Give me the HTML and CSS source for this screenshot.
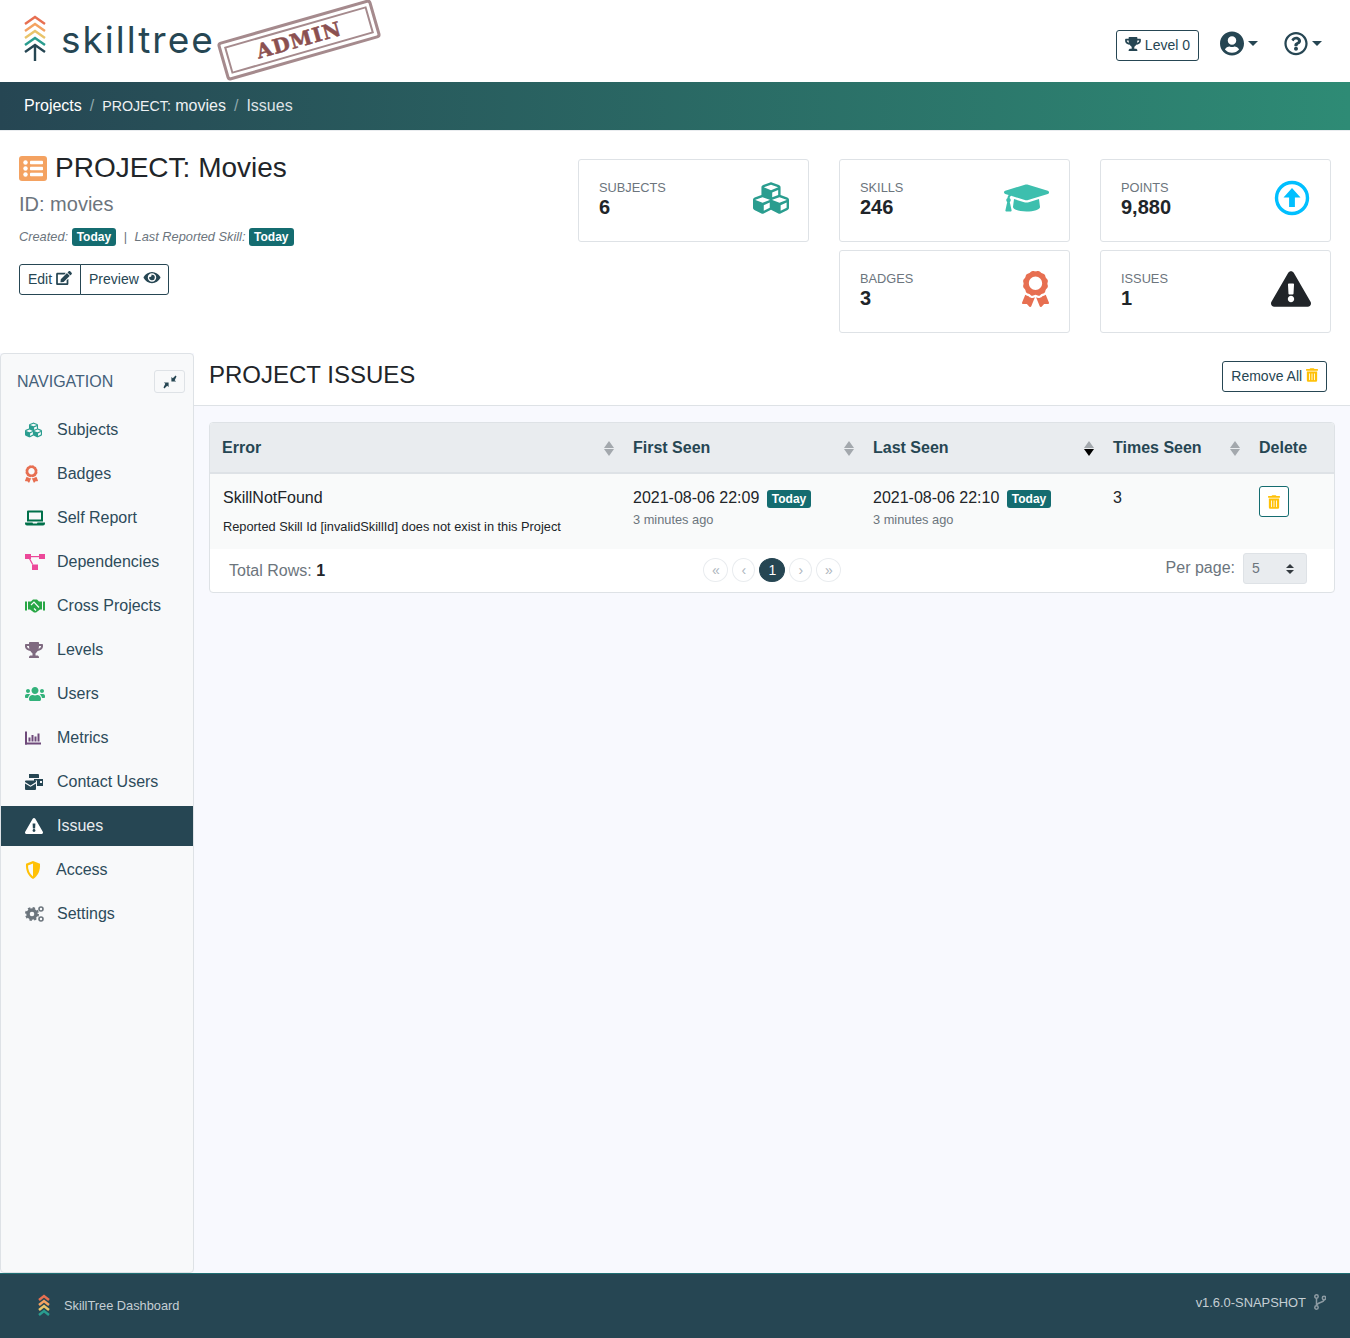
FILE: index.html
```html
<!DOCTYPE html>
<html lang="en">
<head>
    <meta charset="UTF-8">
    <title>SkillTree Dashboard</title>
    <link rel="stylesheet" href="styles.css">
</head>
<body>
    <svg class="sprite" xmlns="http://www.w3.org/2000/svg">
        <symbol id="i-cubes" viewBox="0 0 512 512"><path d="M488.6 250.2L392 214V105.5c0-15-9.3-28.4-23.4-33.7l-100-37.5c-8.1-3.1-17.1-3.1-25.3 0l-100 37.5c-14.1 5.3-23.4 18.7-23.4 33.7V214l-96.6 36.2C9.3 255.5 0 268.9 0 283.9V394c0 13.6 7.7 26.1 19.9 32.2l100 50c10.1 5.1 22.1 5.1 32.2 0l103.9-52 103.9 52c10.1 5.1 22.1 5.1 32.2 0l100-50c12.2-6.1 19.9-18.6 19.9-32.2V283.9c0-15-9.3-28.4-23.4-33.7zM358 214.8l-85 31.9v-68.2l85-37v73.3zM154 104.1l102-38.2 102 38.2v.6l-102 41.4-102-41.4v-.6zm84 291.1l-85 42.5v-79.1l85-38.8v75.4zm0-112l-102 41.4-102-41.4v-.6l102-38.2 102 38.2v.6zm240 112l-85 42.5v-79.1l85-38.8v75.4zm0-112l-102 41.4-102-41.4v-.6l102-38.2 102 38.2v.6z"/></symbol>
        <symbol id="i-award" viewBox="0 0 384 512"><path d="M97.12 362.63c-8.69-8.69-4.16-6.24-25.12-11.85-9.51-2.55-17.87-7.45-25.43-13.32L1.2 448.7c-4.39 10.77 3.81 22.47 15.43 22.03l52.69-2.01L105.56 507c8 8.44 22.04 5.81 26.43-4.96l52.05-127.62c-10.84 6.04-22.87 9.58-35.31 9.58-19.5 0-37.82-7.59-51.61-21.37zM382.8 448.7l-45.37-111.24c-7.56 5.88-15.92 10.77-25.43 13.32-21.07 5.64-16.45 3.18-25.12 11.85-13.79 13.78-32.12 21.37-51.62 21.37-12.44 0-24.47-3.55-35.31-9.58L252 502.04c4.39 10.77 18.44 13.4 26.43 4.96l36.25-38.28 52.69 2.01c11.62.44 19.82-11.27 15.43-22.03zM263 340c15.28-15.55 17.03-14.21 38.79-20.14 13.89-3.79 24.75-14.84 28.47-28.98 7.48-28.4 5.54-24.97 25.95-45.75 10.17-10.35 14.14-25.44 10.42-39.58-7.47-28.38-7.48-24.42 0-52.83 3.72-14.14-.25-29.23-10.42-39.58-20.41-20.78-18.47-17.36-25.95-45.75-3.72-14.14-14.58-25.19-28.47-28.98-27.88-7.61-24.52-5.62-44.95-26.41-10.17-10.35-25-14.4-38.89-10.61-27.87 7.6-23.98 7.61-51.9 0-13.89-3.79-28.72.25-38.89 10.61-20.41 20.78-17.05 18.8-44.94 26.41-13.89 3.79-24.75 14.84-28.47 28.98-7.47 28.39-5.54 24.97-25.95 45.75-10.17 10.35-14.15 25.44-10.42 39.58 7.47 28.36 7.48 24.4 0 52.82-3.72 14.14.25 29.23 10.42 39.59 20.41 20.78 18.47 17.35 25.95 45.75 3.72 14.14 14.58 25.19 28.47 28.98C104.6 325.96 106.27 325 121 340c13.23 13.47 33.84 15.88 49.74 5.82a39.676 39.676 0 0 1 42.53 0c15.89 10.06 36.5 7.65 49.73-5.82zM97.66 175.96c0-53.03 42.24-96.02 94.34-96.02s94.34 42.99 94.34 96.02-42.24 96.02-94.34 96.02-94.34-42.99-94.34-96.02z"/></symbol>
        <symbol id="i-warning" viewBox="0 0 576 512"><path d="M569.517 440.013C587.975 472.007 564.806 512 527.94 512H48.054c-36.937 0-59.999-40.055-41.577-71.987L246.423 23.985c18.467-32.009 64.72-31.951 83.154 0l239.94 416.028zM288 354c-25.405 0-46 20.595-46 46s20.595 46 46 46 46-20.595 46-46-20.595-46-46-46zm-43.673-165.346l7.418 136c.347 6.364 5.609 11.346 11.982 11.346h48.546c6.373 0 11.635-4.982 11.982-11.346l7.418-136c.375-6.874-5.098-12.654-11.982-12.654h-63.383c-6.884 0-12.356 5.78-11.981 12.654z"/></symbol>
        <symbol id="i-trophy" viewBox="0 0 576 512"><path d="M552 64H448V24c0-13.3-10.7-24-24-24H152c-13.3 0-24 10.7-24 24v40H24C10.7 64 0 74.7 0 88v56c0 35.7 22.5 72.4 61.9 100.7 31.5 22.7 69.8 37.1 110 41.7C203.3 338.5 240 360 240 360v72h-48c-35.3 0-64 20.7-64 56v12c0 6.6 5.4 12 12 12h296c6.6 0 12-5.4 12-12v-12c0-35.3-28.7-56-64-56h-48v-72s36.7-21.5 68.1-73.6c40.3-4.6 78.6-19 110-41.7 39.3-28.3 61.9-65 61.9-100.7V88c0-13.3-10.7-24-24-24zM99.3 192.8C74.9 175.2 64 155.6 64 144v-16h64.2c1 32.6 5.8 61.2 12.8 86.2-15.1-5.2-29.2-12.4-41.7-21.4zM512 144c0 16.1-17.7 36.1-35.3 48.8-12.5 9-26.7 16.2-41.8 21.4 7-25 11.8-53.6 12.8-86.2H512v16z"/></symbol>
        <symbol id="i-trash" viewBox="0 0 448 512"><path d="M32 464a48 48 0 0 0 48 48h288a48 48 0 0 0 48-48V128H32zm272-256a16 16 0 0 1 32 0v224a16 16 0 0 1-32 0zm-96 0a16 16 0 0 1 32 0v224a16 16 0 0 1-32 0zm-96 0a16 16 0 0 1 32 0v224a16 16 0 0 1-32 0zM432 32H312l-9.4-18.7A24 24 0 0 0 281.1 0H166.8a23.72 23.72 0 0 0-21.4 13.3L136 32H16A16 16 0 0 0 0 48v32a16 16 0 0 0 16 16h416a16 16 0 0 0 16-16V48a16 16 0 0 0-16-16z"/></symbol>
    </svg>

    <header class="topbar">
        <div class="brand">
            <svg class="brand-mark" viewBox="0 0 24 46" fill="none" stroke-width="2.4">
                <path d="M2 9L12 2l10 7" stroke="#e76f51"/>
                <path d="M2 16l10-7 10 7" stroke="#f4a261"/>
                <path d="M2 23l10-7 10 7" stroke="#e9c46a"/>
                <path d="M2 30l10-7 10 7" stroke="#2a9d8f"/>
                <path d="M2 37l10-7 10 7M12 30v16" stroke="#264653"/>
            </svg>
            <span class="brand-name">skilltree</span>
        </div>
        <div class="stamp"><div class="stamp-inner">ADMIN</div></div>
        <div class="top-actions">
            <button class="btn level-btn"><svg class="ico"><use href="#i-trophy"/></svg> Level 0</button>
            <div class="top-menu">
                <svg class="ico-big" viewBox="0 0 496 512"><path d="M248 8C111 8 0 119 0 256s111 248 248 248 248-111 248-248S385 8 248 8zm0 96c48.6 0 88 39.4 88 88s-39.4 88-88 88-88-39.4-88-88 39.4-88 88-88zm0 344c-58.7 0-111.3-26.6-146.5-68.2 18.8-35.4 55.6-59.8 98.5-59.8 2.4 0 4.8.4 7.1 1.1 13 4.2 26.6 6.9 40.9 6.9 14.3 0 28-2.7 40.9-6.9 2.3-.7 4.7-1.1 7.1-1.1 42.9 0 79.7 24.4 98.5 59.8C359.3 421.4 306.7 448 248 448z"/></svg>
                <span class="caret"></span>
            </div>
            <div class="top-menu">
                <svg class="ico-big" viewBox="0 0 512 512"><path d="M256 8C119.043 8 8 119.083 8 256c0 136.997 111.043 248 248 248s248-111.003 248-248C504 119.083 392.957 8 256 8zm0 448c-110.532 0-200-89.431-200-200 0-110.495 89.472-200 200-200 110.491 0 200 89.471 200 200 0 110.53-89.431 200-200 200zm107.244-255.2c0 67.052-72.421 68.084-72.421 92.863V300c0 6.627-5.373 12-12 12h-45.647c-6.627 0-12-5.373-12-12v-8.659c0-35.745 27.1-50.034 47.579-61.516 17.561-9.845 28.324-16.541 28.324-29.579 0-17.246-21.999-28.693-39.784-28.693-23.189 0-33.894 10.977-48.942 29.969-4.057 5.12-11.46 6.071-16.666 2.124l-27.824-21.098c-5.107-3.872-6.251-11.066-2.644-16.363C184.846 131.491 214.94 112 261.794 112c49.071 0 101.45 38.304 101.45 88.8zM298 368c0 23.159-18.841 42-42 42s-42-18.841-42-42 18.841-42 42-42 42 18.841 42 42z"/></svg>
                <span class="caret"></span>
            </div>
        </div>
    </header>

    <nav class="crumbs">
        <a>Projects</a><span class="sep">/</span>
        <a class="crumb-mid"><span class="small-caps">PROJECT:</span> movies</a><span class="sep">/</span>
        <span class="crumb-last">Issues</span>
    </nav>

    <section class="project-head">
        <div class="project-info">
            <h1 class="project-title">
                <span class="title-icon">
                    <svg viewBox="0 0 28 25"><rect width="28" height="25" rx="3" fill="#f4a261"/><g fill="#fff"><circle cx="6.5" cy="6.5" r="2.2"/><circle cx="6.5" cy="12.5" r="2.2"/><circle cx="6.5" cy="18.5" r="2.2"/><rect x="11" y="4.7" width="13" height="3.6" rx=".8"/><rect x="11" y="10.7" width="13" height="3.6" rx=".8"/><rect x="11" y="16.7" width="13" height="3.6" rx=".8"/></g></svg>
                </span>
                PROJECT: Movies
            </h1>
            <div class="project-id">ID: movies</div>
            <div class="project-dates">
                <i>Created:</i> <span class="badge">Today</span>
                <span class="pipe">|</span>
                <i>Last Reported Skill:</i> <span class="badge">Today</span>
            </div>
            <div class="btn-group">
                <button class="btn">Edit <svg class="ico" viewBox="0 0 576 512"><path d="M402.6 83.2l90.2 90.2c3.8 3.8 3.8 10 0 13.8L274.4 405.6l-92.8 10.3c-12.4 1.4-22.9-9.1-21.5-21.5l10.3-92.8L388.8 83.2c3.8-3.8 10-3.8 13.8 0zm162-22.9l-48.8-48.8c-15.2-15.2-39.9-15.2-55.2 0l-35.4 35.4c-3.8 3.8-3.8 10 0 13.8l90.2 90.2c3.8 3.8 10 3.8 13.8 0l35.4-35.4c15.2-15.3 15.2-40 0-55.2zM384 346.2V448H64V128h229.8c3.2 0 6.2-1.3 8.5-3.5l40-40c7.6-7.6 2.2-20.5-8.5-20.5H48C21.5 64 0 85.5 0 112v352c0 26.5 21.5 48 48 48h352c26.5 0 48-21.5 48-48V306.2c0-10.7-12.9-16-20.5-8.5l-40 40c-2.2 2.3-3.5 5.3-3.5 8.5z"/></svg></button>
                <button class="btn">Preview <svg class="ico ico-eye" viewBox="0 0 576 512"><path d="M572.52 241.4C518.29 135.59 410.93 64 288 64S57.68 135.64 3.48 241.41a32.35 32.35 0 0 0 0 29.19C57.71 376.41 165.07 448 288 448s230.32-71.64 284.52-177.41a32.35 32.35 0 0 0 0-29.19zM288 400a144 144 0 1 1 144-144 143.93 143.93 0 0 1-144 144zm0-240a95.31 95.31 0 0 0-25.31 3.79 47.85 47.85 0 0 1-66.9 66.9A95.78 95.78 0 1 0 288 160z"/></svg></button>
            </div>
        </div>
        <div class="stats">
            <div class="stat">
                <div><div class="stat-label">Subjects</div><div class="stat-value">6</div></div>
                <svg class="stat-icon stat-cubes c-subjects"><use href="#i-cubes"/></svg>
            </div>
            <div class="stat">
                <div><div class="stat-label">Skills</div><div class="stat-value">246</div></div>
                <svg class="stat-icon stat-cap" viewBox="0 0 640 512"><path d="M622.34 153.2L343.4 67.5c-15.2-4.67-31.6-4.67-46.79 0L17.66 153.2c-23.54 7.23-23.54 38.36 0 45.59l48.63 14.94c-10.67 13.19-17.23 29.28-17.88 46.9C38.78 266.15 32 276.11 32 288c0 10.78 5.68 19.85 13.86 25.65L20.33 428.53C18.11 438.52 25.71 448 35.94 448h56.11c10.24 0 17.84-9.48 15.62-19.47L82.14 313.65C90.32 307.85 96 298.78 96 288c0-11.57-6.47-21.25-15.66-26.87.76-15.02 8.44-28.3 20.69-36.72L296.6 284.5c9.06 2.78 26.44 6.25 46.79 0l278.95-85.7c23.55-7.24 23.55-38.36 0-45.6zM352.79 315.09c-28.53 8.76-52.84 3.92-65.59 0l-145.02-44.55L128 384c0 35.35 85.96 64 192 64s192-28.65 192-64l-14.18-113.47-145.03 44.56z"/></svg>
            </div>
            <div class="stat">
                <div><div class="stat-label">Points</div><div class="stat-value">9,880</div></div>
                <svg class="stat-icon stat-points" viewBox="0 0 36 36"><circle cx="18" cy="18" r="15.5" fill="none" stroke="#00bfff" stroke-width="3.4"/><path d="M18 8l8.5 9.5h-5.6V27h-5.8v-9.5H9.5z" fill="#00bfff"/></svg>
            </div>
            <div class="stat stat-second">
                <div><div class="stat-label">Badges</div><div class="stat-value">3</div></div>
                <svg class="stat-icon stat-award"><use href="#i-award"/></svg>
            </div>
            <div class="stat">
                <div><div class="stat-label">Issues</div><div class="stat-value">1</div></div>
                <svg class="stat-icon stat-warn"><use href="#i-warning"/></svg>
            </div>
        </div>
    </section>

    <div class="page">
        <aside class="sidebar">
            <div class="side-head">
                <span>NAVIGATION</span>
                <button class="collapse">
                    <svg viewBox="0 0 14 14" width="14" height="14" fill="#264653"><path d="M13.5 1.4L12.6.5 9.800 3.300 8.400 1.900v4.700h4.700l-1.400-1.400zM.5 12.600l.9.9 2.800-2.800 1.400 1.400V7.400H.9l1.400 1.400z"/></svg>
                </button>
            </div>
            <ul class="side-list">
                <li class="side-item"><span class="side-icon"><svg class="c-subjects w17"><use href="#i-cubes"/></svg></span>Subjects</li>
                <li class="side-item"><span class="side-icon"><svg class="c-badges w13"><use href="#i-award"/></svg></span>Badges</li>
                <li class="side-item"><span class="side-icon">
                    <svg viewBox="0 0 20 15" width="20" height="15" fill="#00704a"><path d="M3 0h14a1 1 0 0 1 1 1v10H2V1a1 1 0 0 1 1-1zm1 2v7h12V2zM0 12h7.500l.5 1h4l.5-1H20v1a2 2 0 0 1-2 2H2a2 2 0 0 1-2-2z"/></svg>
                </span>Self Report</li>
                <li class="side-item"><span class="side-icon">
                    <svg viewBox="0 0 20 16" width="20" height="16" fill="#ec4899"><rect width="6" height="5"/><rect x="14" width="6" height="5"/><rect x="7" y="10.500" width="6" height="5.500"/><rect x="6" y="2" width="8" height="1.200"/><path d="M4 5h1.400l3 5.500H7z"/></svg>
                </span>Dependencies</li>
                <li class="side-item"><span class="side-icon">
                    <svg viewBox="0 0 20 13" width="20" height="13" fill="#28a745"><rect y="2" width="2" height="9"/><rect x="18" y="2" width="2" height="9"/><path d="M3 2h3l2-2h4l2 2h3v8h-2l-4 3H9L5 10H3z"/><path d="M6 5.500L9 2.500l5 5.500M9 9l2 2" fill="none" stroke="#f8f9fa" stroke-width="1.200"/></svg>
                </span>Cross Projects</li>
                <li class="side-item"><span class="side-icon"><svg class="c-levels w18"><use href="#i-trophy"/></svg></span>Levels</li>
                <li class="side-item"><span class="side-icon"><svg class="c-users w20" viewBox="0 0 640 512"><path d="M96 224c35.3 0 64-28.7 64-64s-28.7-64-64-64-64 28.7-64 64 28.7 64 64 64zm448 0c35.3 0 64-28.7 64-64s-28.7-64-64-64-64 28.7-64 64 28.7 64 64 64zm32 32h-64c-17.6 0-33.5 7.1-45.1 18.6 40.3 22.1 68.9 62 75.1 109.4h66c17.7 0 32-14.3 32-32v-32c0-35.3-28.7-64-64-64zm-256 0c61.9 0 112-50.1 112-112S381.9 32 320 32 208 82.1 208 144s50.1 112 112 112zm76.8 32h-8.3c-20.8 10-43.9 16-68.5 16s-47.6-6-68.5-16h-8.3C179.6 288 128 339.6 128 403.2V432c0 26.5 21.5 48 48 48h288c26.5 0 48-21.5 48-48v-28.8c0-63.6-51.6-115.2-115.2-115.2zm-223.7-13.4C161.5 263.1 145.6 256 128 256H64c-35.3 0-64 28.7-64 64v32c0 17.7 14.3 32 32 32h65.9c6.3-47.4 34.9-87.3 75.2-109.4z"/></svg></span>Users</li>
                <li class="side-item"><span class="side-icon">
                    <svg viewBox="0 0 16 13" width="16" height="13" fill="#6f4a7a"><rect width="2" height="13"/><rect y="11" width="16" height="2"/><rect x="3.500" y="6" width="2" height="4"/><rect x="6.500" y="3.500" width="2" height="6.500"/><rect x="9.500" y="5" width="2" height="5"/><rect x="12.500" y="2" width="2" height="8"/></svg>
                </span>Metrics</li>
                <li class="side-item"><span class="side-icon">
                    <svg viewBox="0 0 18 16" width="18" height="16" fill="#264653"><path d="M4 0h9a1 1 0 0 1 1 1v3H4zM9 5h9v7h-6V6.500H9zM15 7v2h2V7zM0 7.500a1 1 0 0 1 1-1h9a1 1 0 0 1 1 1V8L5.500 11.500 0 8zM0 9.500l5.500 3.300L11 9.500V15a1 1 0 0 1-1 1H1a1 1 0 0 1-1-1z"/></svg>
                </span>Contact Users</li>
                <li class="side-item active"><span class="side-icon"><svg class="c-white w18"><use href="#i-warning"/></svg></span>Issues</li>
                <li class="side-item item-access"><span class="side-icon">
                    <svg viewBox="0 0 16 18" width="16" height="18"><path d="M8 0l7 2.800c.4 6-1.500 12-7 15.200C2.500 14.800.600 8.800 1 2.800z" fill="#ffc107"/><path d="M8 2.500L3 4.500c0 4.500 1.500 8.500 5 11z" fill="#f8f9fa"/></svg>
                </span>Access</li>
                <li class="side-item"><span class="side-icon">
                    <svg viewBox="0 0 20 16" width="20" height="16" fill="none" stroke="#6c757d"><circle cx="7" cy="8" r="4" stroke-width="3.400"/><circle cx="7" cy="8" r="6" stroke-width="2" stroke-dasharray="2.400 2.300"/><circle cx="16" cy="3" r="2" stroke-width="1.600"/><circle cx="16" cy="13" r="2" stroke-width="1.600"/></svg>
                </span>Settings</li>
            </ul>
        </aside>

        <main class="content">
            <div class="page-title">
                <h2>PROJECT ISSUES</h2>
                <button class="btn">Remove All <svg class="ico c-yellow"><use href="#i-trash"/></svg></button>
            </div>
            <div class="table-card">
                <table class="issues">
                    <colgroup><col class="col-error"><col class="col-seen"><col class="col-seen"><col class="col-times"><col></colgroup>
                    <thead>
                        <tr>
                            <th>Error<span class="sort"></span></th>
                            <th>First Seen<span class="sort"></span></th>
                            <th>Last Seen<span class="sort sort-desc"></span></th>
                            <th>Times Seen<span class="sort"></span></th>
                            <th>Delete</th>
                        </tr>
                    </thead>
                    <tbody>
                        <tr>
                            <td class="cell-error">
                                <div>SkillNotFound</div>
                                <div class="err-msg">Reported Skill Id [invalidSkillId] does not exist in this Project</div>
                            </td>
                            <td>2021-08-06 22:09 <span class="badge">Today</span><div class="ago">3 minutes ago</div></td>
                            <td>2021-08-06 22:10 <span class="badge">Today</span><div class="ago">3 minutes ago</div></td>
                            <td>3</td>
                            <td><button class="del-btn"><svg class="ico c-yellow"><use href="#i-trash"/></svg></button></td>
                        </tr>
                    </tbody>
                </table>
                <div class="table-foot">
                    <div class="total">Total Rows: <b>1</b></div>
                    <div class="pager">
                        <span class="pg pg-end">«</span><span class="pg">‹</span><span class="pg pg-on">1</span><span class="pg">›</span><span class="pg pg-end">»</span>
                    </div>
                    <div class="per-page"><span class="per-label">Per page:</span> <span class="select">5<span class="updown"></span></span></div>
                </div>
            </div>
        </main>
    </div>

    <footer class="footer">
        <div class="foot-left">
            <svg class="foot-mark" viewBox="0 0 12 22" fill="none" stroke-width="2.500">
                <path d="M1 6l5-4 5 4" stroke="#e76f51"/>
                <path d="M1 11l5-4 5 4" stroke="#f4a261"/>
                <path d="M1 16l5-4 5 4" stroke="#e9c46a"/>
                <path d="M1 21l5-4 5 4" stroke="#2a9d8f"/>
            </svg>
            SkillTree Dashboard
        </div>
        <div class="foot-right">
            v1.6.0-SNAPSHOT
            <svg viewBox="0 0 12 16" width="12" height="16" fill="none" stroke="#8d9ba3" stroke-width="1.500"><circle cx="2.500" cy="2.500" r="1.700"/><circle cx="2.500" cy="13.500" r="1.700"/><circle cx="10" cy="4" r="1.700"/><path d="M2.500 4.200v7.600M10 5.700c0 3.300-7.500 2.300-7.500 6"/></svg>
        </div>
    </footer>
</body>
</html>
```

FILE: styles.css
```css
*{
    box-sizing: border-box;
}
html, body{
    margin: 0;
    padding: 0;
}
body{
    min-height: 1338px;
    display: flex;
    flex-direction: column;
    background: #f8f9fe;
    color: #212529;
    font-family: "Liberation Sans", Arial, sans-serif;
    font-size: 16px;
}
.sprite{
    display: none;
}
button{
    font-family: inherit;
}

/* top bar */
.topbar{
    position: relative;
    height: 82px;
    flex: none;
    display: flex;
    align-items: flex-start;
    justify-content: space-between;
    background: #fff;
}
.brand{
    display: flex;
    align-items: flex-start;
    padding: 15px 0 0 23px;
}
.brand-mark{
    width: 24px;
    height: 46px;
}
.brand-name{
    margin-top: 2px;
    margin-left: 14px;
    color: #264653;
    font-family: Inter, sans-serif;
    font-size: 37px;
    font-weight: 400;
    line-height: 46px;
    letter-spacing: 2px;
}
.stamp{
    position: absolute;
    left: 219px;
    top: 20px;
    width: 160px;
    height: 40px;
    padding: 3px;
    border: 3px solid #a58a8d;
    border-radius: 4px;
    transform: rotate(-16deg);
}
.stamp-inner{
    height: 100%;
    border: 2px solid #a58a8d;
    color: #8b5050;
    font-family: "DejaVu Serif", serif;
    font-size: 20px;
    font-weight: bold;
    line-height: 24px;
    letter-spacing: 1px;
    text-align: center;
    -webkit-text-stroke: .5px #8b5050;
}
.top-actions{
    display: flex;
    align-items: center;
    padding: 30px 28px 0 0;
}
.top-menu{
    display: flex;
    align-items: center;
    margin-left: 21px;
    margin-bottom: 4px;
}
.top-menu + .top-menu{
    margin-left: 26px;
}
.ico-big{
    width: 24px;
    height: 25px;
    fill: #264653;
}
.caret{
    width: 0;
    height: 0;
    margin-left: 4px;
    border-left: 5px solid transparent;
    border-right: 5px solid transparent;
    border-top: 5px solid #264653;
}

/* buttons */
.btn{
    height: 31px;
    padding: 0 8px 2px;
    border: 1px solid #264653;
    border-radius: 3px;
    background: #fff;
    color: #264653;
    font-size: 14px;
    white-space: nowrap;
}
.ico{
    display: inline-block;
    width: 16px;
    height: 14px;
    fill: currentColor;
    vertical-align: -1px;
}
.ico-eye{
    width: 18px;
    height: 15px;
}
.btn-group{
    display: flex;
    margin-top: 18px;
}
.btn-group .btn:first-child{
    border-radius: 3px 0 0 3px;
}
.btn-group .btn:last-child{
    margin-left: -1px;
    padding-right: 7px;
    border-radius: 0 3px 3px 0;
}

/* breadcrumb */
.crumbs{
    height: 48px;
    flex: none;
    display: flex;
    align-items: center;
    padding-left: 24px;
    background: linear-gradient(90deg, #264653, #2e8b75);
    color: #e9ecef;
}
.crumbs a{
    color: #fff;
}
.crumbs .crumb-mid{
    color: #eef1f3;
}
.small-caps{
    font-size: 14.2px;
}
.crumbs .sep{
    margin: 0 8px;
    color: #8fa8ad;
}
.crumb-last{
    color: #dee2e6;
}

/* project header */
.project-head{
    height: 223px;
    flex: none;
    display: flex;
    justify-content: space-between;
    padding: 28px 19px 0;
    border-top: 1px solid #e9ecef;
    background: #fff;
}
.project-title{
    display: flex;
    align-items: center;
    margin: -9px 0 0;
    font-size: 28px;
    font-weight: 400;
    line-height: 36px;
}
.title-icon{
    display: flex;
    margin-right: 8px;
}
.title-icon svg{
    width: 28px;
    height: 25px;
}
.project-id{
    margin-top: 4px;
    color: #6c757d;
    font-size: 20px;
    line-height: 28px;
}
.project-dates{
    margin-top: 10px;
    color: #6c757d;
    font-size: 12.8px;
    line-height: 18px;
}
.pipe{
    margin: 0 4px;
}
.badge{
    display: inline-block;
    padding: 2px 5px;
    border-radius: 3px;
    background: #146c70;
    color: #fff;
    font-size: 12px;
    font-weight: bold;
    font-style: normal;
    line-height: 14px;
    vertical-align: baseline;
}
.stats{
    display: grid;
    grid-template-columns: repeat(3, 231px);
    grid-auto-rows: 83px;
    gap: 8px 30px;
}
.stat{
    display: flex;
    justify-content: space-between;
    align-items: flex-start;
    padding: 20px 20px 0;
    border: 1px solid #dee2e6;
    border-radius: 3px;
    background: #fff;
}
.stat-second{
    grid-column: 2;
}
.stat-label{
    color: #6c757d;
    font-size: 12.8px;
    line-height: 15px;
    text-transform: uppercase;
}
.stat-value{
    font-size: 20px;
    font-weight: bold;
    line-height: 24px;
}
.stat-icon{
    width: 36px;
    height: 36px;
    flex: none;
}
.stat-cubes{
    margin-right: -1px;
}
.c-subjects{
    fill: #2a9d8f;
}
.stat-cap{
    width: 45px;
    height: 36px;
    fill: #3dbfae;
}
.stat-points{
    width: 36px;
    height: 36px;
}
.stat-award{
    width: 27px;
    height: 36px;
    fill: #e76f51;
}
.stat-warn{
    width: 40px;
    height: 36px;
    margin-right: -1px;
    fill: #212529;
}

/* sidebar */
.page{
    flex: 1;
    display: flex;
}
.sidebar{
    width: 194px;
    flex: none;
    border: 1px solid #dee2e6;
    border-radius: 4px;
    background: #f8f9fa;
}
.side-head{
    display: flex;
    justify-content: space-between;
    align-items: center;
    height: 55px;
    margin-bottom: 1px;
    padding: 0 8px 0 16px;
    color: #44617a;
}
.collapse{
    display: flex;
    align-items: center;
    justify-content: center;
    width: 31px;
    height: 23px;
    padding: 0;
    border: 1px solid #dee2e6;
    border-radius: 3px;
    background: #f8f9fa;
}
.side-list{
    margin: 0;
    padding: 0;
    list-style: none;
}
.side-item{
    display: flex;
    align-items: center;
    height: 40px;
    margin-bottom: 4px;
    padding-left: 24px;
    color: #2d4b5a;
}
.side-item.active{
    background: #264653;
    color: #e9ecef;
}
.side-icon{
    display: flex;
    align-items: center;
    width: 32px;
    height: 20px;
}
.item-access .side-icon{
    width: 31px;
}
.side-icon svg{
    height: 18px;
}
.w13{
    width: 13px;
}
.w17{
    width: 17px;
}
.w18{
    width: 18px;
}
.w20{
    width: 20px;
}
.c-badges{
    fill: #e76f51;
}
.c-levels{
    fill: #7f6a80;
}
.c-users{
    fill: #33b27b;
}
.c-white{
    fill: #fff;
}
.c-yellow{
    color: #ffc107;
    fill: #ffc107;
}

/* content */
.content{
    flex: 1;
    min-width: 0;
}
.page-title{
    display: flex;
    justify-content: space-between;
    align-items: center;
    height: 53px;
    padding: 0 23px 5px 15px;
    border-bottom: 1px solid #dee2e6;
    background: #fff;
}
.page-title h2{
    margin: 0 0 4px;
    font-size: 24px;
    font-weight: 400;
}
.page-title .ico{
    width: 12px;
}
.table-card{
    margin: 16px 15px 0;
    border: 1px solid #dee2e6;
    border-radius: 4px;
    background: #fff;
    overflow: hidden;
}
.issues{
    width: 100%;
    table-layout: fixed;
    border-collapse: collapse;
}
.col-error{
    width: 411px;
}
.col-seen{
    width: 240px;
}
.col-times{
    width: 146px;
}
.issues th{
    position: relative;
    height: 50px;
    padding: 0 12px;
    border-bottom: 2px solid #dee2e6;
    background: #e9ecef;
    color: #264653;
    font-weight: bold;
    text-align: left;
}
.sort{
    position: absolute;
    right: 7px;
    top: 18px;
    width: 10px;
    height: 15px;
}
.sort::before, .sort::after{
    content: "";
    position: absolute;
    left: 0;
    border-left: 5px solid transparent;
    border-right: 5px solid transparent;
}
.sort::before{
    top: 0;
    border-bottom: 7px solid #a3a8ad;
}
.sort::after{
    bottom: 0;
    border-top: 7px solid #a3a8ad;
}
.sort-desc::after{
    border-top-color: #000;
}
.issues td{
    height: 75px;
    padding: 12px;
    background: #f9fafa;
    vertical-align: top;
    line-height: 24px;
}
.issues td.cell-error{
    padding-left: 13px;
}
.err-msg{
    margin-top: 7px;
    font-size: 12.8px;
    line-height: 20px;
}
.ago{
    color: #6c757d;
    font-size: 12.8px;
    line-height: 20px;
}
.issues td .badge{
    margin-left: 3px;
}
.del-btn{
    display: block;
    width: 30px;
    height: 31px;
    padding: 0;
    border: 1px solid #146c70;
    border-radius: 3px;
    background: #fff;
}
.del-btn .ico{
    display: block;
    width: 12px;
    margin: 0 auto;
}
.table-foot{
    position: relative;
    display: flex;
    justify-content: space-between;
    align-items: center;
    height: 43px;
    padding: 0 27px 0 19px;
    color: #6c757d;
}
.total b{
    color: #212529;
}
.pager{
    display: flex;
    align-items: center;
    gap: 4px;
    margin: 0 0 2px 54px;
}
.pg{
    display: flex;
    align-items: center;
    justify-content: center;
    width: 23px;
    height: 24px;
    border: 1px solid #e9ecef;
    border-radius: 50%;
    color: #adb5bd;
    font-size: 14px;
}
.pg-end{
    width: 25px;
}
.pg-on{
    width: 26px;
    border-color: #264653;
    background: #264653;
    color: #fff;
}
.per-page{
    display: flex;
    align-items: center;
    gap: 8px;
    margin-bottom: 4px;
}
.per-label{
    margin-bottom: 2px;
}
.select{
    position: relative;
    width: 64px;
    height: 31px;
    padding-left: 8px;
    border: 1px solid #dee2e6;
    border-radius: 3px;
    background: #e9ecef;
    font-size: 14px;
    line-height: 29px;
}
.updown{
    position: absolute;
    right: 12px;
    top: 10px;
    width: 8px;
    height: 10px;
}
.updown::before, .updown::after{
    content: "";
    position: absolute;
    left: 0;
    border-left: 4px solid transparent;
    border-right: 4px solid transparent;
}
.updown::before{
    top: 0;
    border-bottom: 4px solid #343a40;
}
.updown::after{
    bottom: 0;
    border-top: 4px solid #343a40;
}

/* footer */
.footer{
    height: 65px;
    flex: none;
    display: flex;
    justify-content: space-between;
    align-items: flex-start;
    padding: 20px 24px 0 38px;
    border-top: 1px solid #1f6f73;
    background: #264653;
    color: #c5ced3;
    font-size: 12.8px;
}
.foot-left{
    display: flex;
    align-items: center;
    gap: 14px;
}
.foot-mark{
    width: 12px;
    height: 22px;
}
.foot-right{
    display: flex;
    align-items: center;
    gap: 8px;
    font-size: 12.9px;
}
```
